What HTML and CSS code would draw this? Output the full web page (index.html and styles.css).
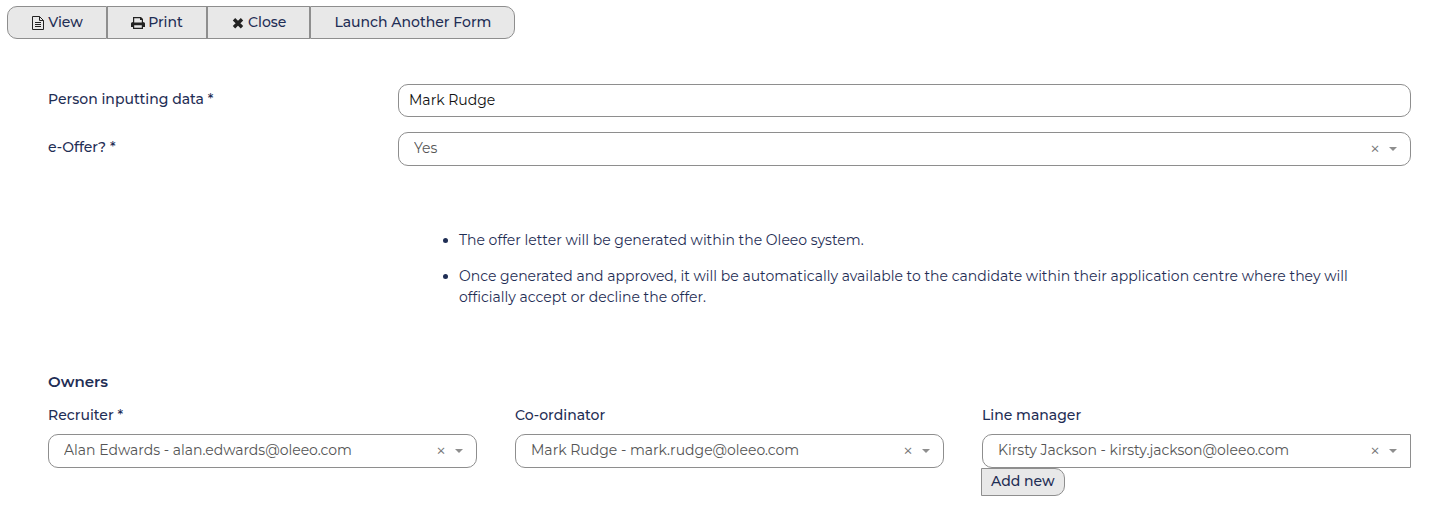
FILE: index.html
```html
<!DOCTYPE html>
<html lang="en">
<head>
    <meta charset="UTF-8">
    <meta name="viewport" content="width=device-width, initial-scale=1.0">
    <title>Offer Form</title>
    <link rel="stylesheet" href="styles.css">
</head>
<body>
    <nav class="toolbar">
        <button type="button" class="btn">
            <svg class="icon" viewBox="0 0 14 14" fill="none" stroke="#222" aria-hidden="true">
                <path d="M1.500 .5h7l4 4v9h-11zM8.500 .5v4h4M4 6.500h6M4 8.500h6M4 10.500h6"/>
            </svg>
            View
        </button>
        <button type="button" class="btn">
            <svg class="icon" viewBox="0 0 14 14" fill="#222" aria-hidden="true">
                <path fill-rule="evenodd" d="M2 1h8l2 2v3q2 0 2 1.500v3.500h-2V13H2v-2H0V7.500q0-1.500 2-1.500zM3.200 2.200v4.300h7.600V4H9V2.200zM3.200 9.200v2.600h7.600V9.200z"/>
            </svg>
            Print
        </button>
        <button type="button" class="btn">
            <svg class="icon" viewBox="0 0 14 14" stroke="#222" stroke-width="3.400" aria-hidden="true">
                <path d="M3 3.200l8 8M11 3.200l-8 8"/>
            </svg>
            Close
        </button>
        <button type="button" class="btn">Launch Another Form</button>
    </nav>

    <form class="offer-form">
        <div class="row">
            <label for="person">Person inputting data *</label>
            <input type="text" id="person" class="text-input" value="Mark Rudge">
        </div>
        <div class="row">
            <label for="eoffer">e-Offer? *</label>
            <div class="select-box">
                <select id="eoffer">
                    <option>Yes</option>
                </select>
                <button type="button" class="clear" aria-label="Clear">×</button>
            </div>
        </div>

        <ul class="notes">
            <li>The offer letter will be generated within the Oleeo system.</li>
            <li>Once generated and approved, it will be automatically available to the candidate within their application centre where they will officially accept or decline the offer.</li>
        </ul>

        <h2>Owners</h2>
        <div class="owners">
            <div class="owner">
                <label for="recruiter">Recruiter *</label>
                <div class="select-box">
                    <select id="recruiter">
                        <option>Alan Edwards - alan.edwards@oleeo.com</option>
                    </select>
                    <button type="button" class="clear" aria-label="Clear">×</button>
                </div>
            </div>
            <div class="owner">
                <label for="coordinator">Co-ordinator</label>
                <div class="select-box">
                    <select id="coordinator">
                        <option>Mark Rudge - mark.rudge@oleeo.com</option>
                    </select>
                    <button type="button" class="clear" aria-label="Clear">×</button>
                </div>
            </div>
            <div class="owner">
                <label for="manager">Line manager</label>
                <div class="select-box with-button">
                    <select id="manager">
                        <option>Kirsty Jackson - kirsty.jackson@oleeo.com</option>
                    </select>
                    <button type="button" class="clear" aria-label="Clear">×</button>
                </div>
                <button type="button" class="add-new">Add new</button>
            </div>
        </div>
    </form>
</body>
</html>
```
FILE: styles.css
```css
* {
    box-sizing: border-box;
}
body {
    margin: 0;
    background-color: #fff;
    color: #1f2e55;
    font-family: Montserrat, Inter, sans-serif;
    font-size: 14px;
    font-weight: 500;
    line-height: 21px;
}
button,
input,
select {
    font: inherit;
}

/* Toolbar */
.toolbar {
    display: flex;
    padding: 6px 7px;
}
.btn {
    display: flex;
    align-items: center;
    justify-content: center;
    gap: 3px;
    min-width: 100px;
    height: 33px;
    padding: 0 23px;
    background-color: #e8e8e8;
    border: 1px solid #8e8e8e;
    color: #1f2e55;
    white-space: nowrap;
    cursor: pointer;
}
.btn:first-child {
    border-radius: 10px 0 0 10px;
}
.btn:last-child {
    border-radius: 0 10px 10px 0;
}
.icon {
    width: 14px;
    height: 14px;
}

/* Form rows */
.offer-form {
    padding: 39px 21px 22px 48px;
}
.row {
    display: grid;
    grid-template-columns: 350px 1fr;
    align-items: start;
    margin-bottom: 15px;
}
.row label {
    padding-top: 5px;
}
.text-input {
    width: 100%;
    height: 33px;
    padding: 0 10px 2px;
    border: 1px solid #8e8e8e;
    border-radius: 10px;
    background-color: #fff;
    color: #111;
    font-weight: 400;
}

/* Drop-downs */
.select-box {
    position: relative;
}
.select-box select {
    display: block;
    width: 100%;
    height: 34px;
    padding: 0 50px 1px 15px;
    border: 1px solid #8e8e8e;
    border-radius: 10px;
    background-color: #fff;
    color: #555;
    font-weight: 400;
    appearance: none;
}
.select-box::after {
    content: "";
    position: absolute;
    top: 15px;
    right: 14px;
    border: 4px solid transparent;
    border-top: 4px solid #8e8e8e;
    pointer-events: none;
}
.clear {
    position: absolute;
    top: 6px;
    right: 29px;
    width: 14px;
    padding: 0;
    border: none;
    background: none;
    color: #777;
    font-family: "Open Sans", sans-serif;
    font-size: 15px;
    font-weight: 400;
    text-align: center;
    cursor: pointer;
}
.with-button select {
    border-radius: 10px 0 0 10px;
}

/* Bullet notes */
.notes {
    margin: 64px 0 0 350px;
    padding: 0 40px 0 61px;
    font-weight: 400;
}
.notes li {
    margin-bottom: 15px;
}

/* Owners */
.offer-form h2 {
    margin: 63px 0 13px;
    font-size: 15px;
    font-weight: 600;
}
.owners {
    display: grid;
    grid-template-columns: repeat(3, 1fr);
    gap: 38px;
}
.owner label {
    display: block;
    margin-bottom: 8px;
}
.add-new {
    display: block;
    height: 28px;
    margin-left: -1px;
    padding: 0 9px 1px;
    background-color: #e8e8e8;
    border: 1px solid #8e8e8e;
    border-radius: 0 10px 10px 0;
    color: #1f2e55;
    cursor: pointer;
}
```
